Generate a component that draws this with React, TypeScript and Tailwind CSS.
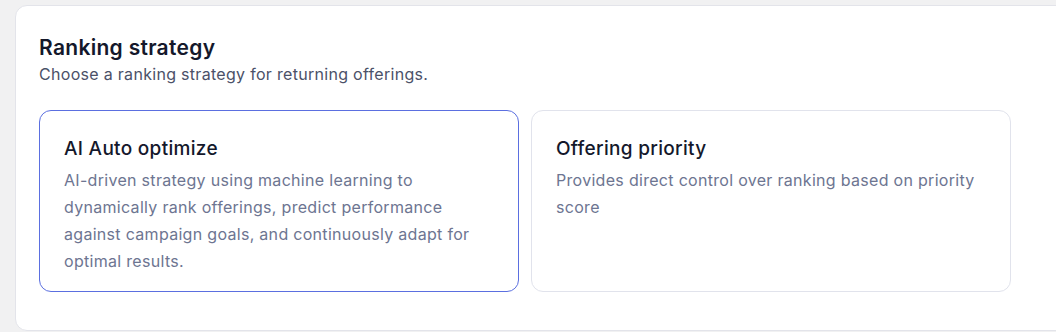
import React from 'react';

const options = [
  {
    title: 'AI Auto optimize',
    text: 'AI-driven strategy using machine learning to dynamically rank offerings, predict performance against campaign goals, and continuously adapt for optimal results.',
    selected: true,
  },
  {
    title: 'Offering priority',
    text: 'Provides direct control over ranking based on priority score',
    selected: false,
  },
];

const App: React.FC = () => {
  return (
    <div
      className="min-h-[332px] w-[1056px] overflow-hidden bg-[#f1f1f2] pl-[15px] pt-[5px]"
      style={{ fontFamily: 'Inter, "Noto Sans", sans-serif' }}
    >
      <div className="w-[1080px] rounded-tl-xl rounded-bl-xl border border-[#e3e4ea] bg-white pl-[23px] pt-7 pb-[38px]">
        <h2 className="text-[21px] leading-7 font-semibold tracking-[0.3px] text-[#14182b]">
          Ranking strategy
        </h2>
        <p className="text-[16px] leading-6 tracking-[0.3px] text-[#4b5168]">
          Choose a ranking strategy for returning offerings.
        </p>
        <div className="mt-6 flex gap-3">
          {options.map((o) => (
            <div
              key={o.title}
              className={
                o.selected
                  ? 'flex w-[480px] flex-col rounded-xl border border-[#5b6fe0] bg-white px-6 pt-6 pb-4'
                  : 'flex w-[480px] flex-col rounded-xl border border-[#e1e3ec] bg-white px-6 pt-6 pb-4'
              }
            >
              <span className="text-[19px] leading-7 font-medium tracking-[0.3px] text-[#14182b]">
                {o.title}
              </span>
              <span className="mt-1 text-[16px] leading-[27px] tracking-[0.3px] text-[#6d7591]">
                {o.text}
              </span>
            </div>
          ))}
        </div>
      </div>
    </div>
  );
};

export default App;
